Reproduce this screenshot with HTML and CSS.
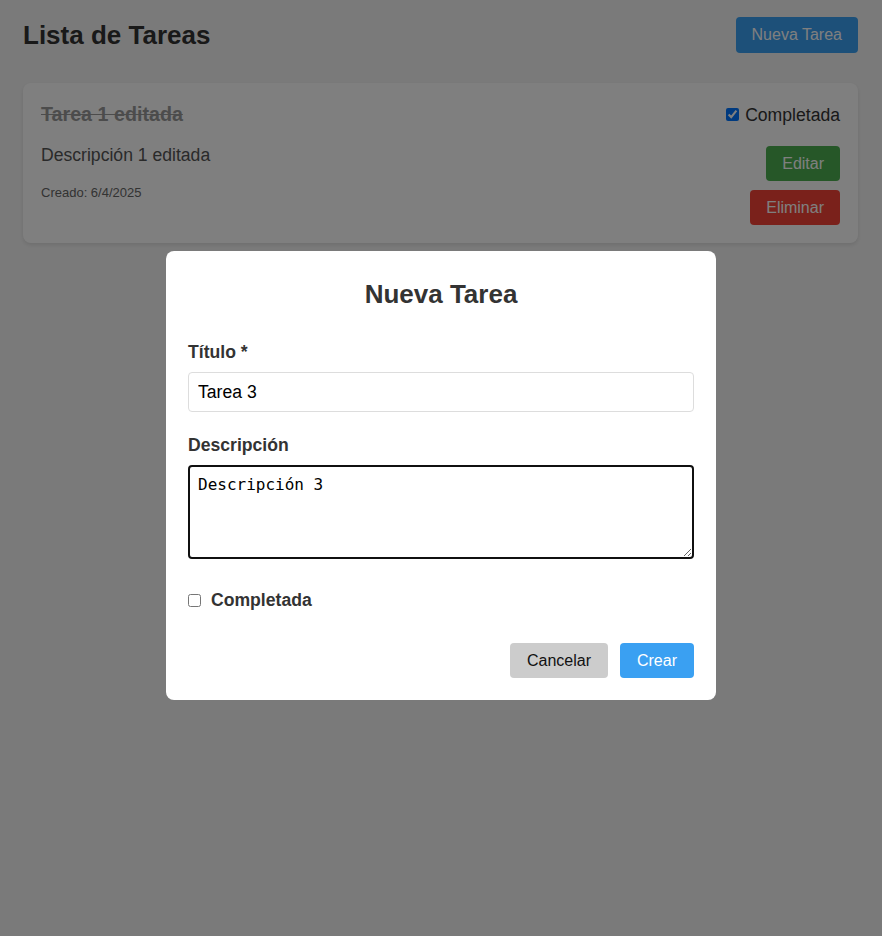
FILE: index.html
```html
<!DOCTYPE html>
<html lang="es">
<head>
<meta charset="utf-8">
<title>Lista de Tareas</title>
<link rel="stylesheet" href="styles.css">
</head>
<body>
<div class="app">
  <header class="app-header">
    <h1 class="app-title">Lista de Tareas</h1>
    <button class="btn btn-primary btn-header">Nueva Tarea</button>
  </header>

  <div class="task-card">
    <div class="task-top">
      <h3 class="task-title done">Tarea 1 editada</h3>
      <label class="task-check"><input type="checkbox" checked> Completada</label>
    </div>
    <div class="task-body">
      <div class="task-info">
        <p class="task-desc">Descripción 1 editada</p>
        <p class="task-date">Creado: 6/4/2025</p>
      </div>
      <div class="task-actions">
        <button class="btn btn-edit">Editar</button>
        <button class="btn btn-delete">Eliminar</button>
      </div>
    </div>
  </div>
</div>

<div class="overlay">
  <div class="modal">
    <h2 class="modal-title">Nueva Tarea</h2>
    <div class="field">
      <label class="field-label">Título *</label>
      <input class="field-input" type="text" value="Tarea 3">
    </div>
    <div class="field">
      <label class="field-label">Descripción</label>
      <textarea class="field-textarea">Descripción 3</textarea>
    </div>
    <label class="field-check"><input type="checkbox"> Completada</label>
    <div class="modal-actions">
      <button class="btn btn-cancel">Cancelar</button>
      <button class="btn btn-primary">Crear</button>
    </div>
  </div>
</div>
</body>
</html>
```
FILE: styles.css
```css
* { box-sizing: border-box; }

html, body {
  margin: 0;
  padding: 0;
}

body {
  background: #f5f5f5;
  font-family: "Liberation Sans", Arial, sans-serif;
  color: #333;
  height: 936px;
}

.app {
  padding: 17px 24px 17px 23px;
}

.app-header {
  display: flex;
  justify-content: space-between;
  align-items: center;
  height: 35px;
  margin-bottom: 31px;
}

.app-title {
  margin: 0;
  font-size: 26px;
  line-height: 30px;
  font-weight: bold;
  color: #333;
}

.btn {
  font-family: "Liberation Sans", Arial, sans-serif;
  font-size: 16px;
  line-height: 19px;
  padding: 8px 16px;
  border: none;
  border-radius: 4px;
  cursor: pointer;
  color: #fff;
}

.btn-header {
  height: 36px;
}

.btn-primary { background: #3aa0f2; }
.btn-edit { background: #4caf50; }
.btn-delete { background: #f44336; }
.btn-cancel { background: #ccc; color: #111; }

.task-card {
  background: #fff;
  border-radius: 8px;
  box-shadow: 0 2px 4px rgba(0, 0, 0, 0.1);
  padding: 20px 18px 18px;
}

.task-top {
  display: flex;
  justify-content: space-between;
  align-items: center;
  margin-bottom: 19px;
}

.task-title {
  margin: 0;
  font-size: 19.7px;
  line-height: 23px;
  font-weight: bold;
  color: #999;
}

.task-title.done { text-decoration: line-through; }

.task-check {
  display: flex;
  align-items: center;
  font-size: 17.6px;
  line-height: 20px;
  color: #333;
}

.task-check input {
  width: 13px;
  height: 13px;
  margin: 0 6px 0 0;
}

.task-body {
  display: flex;
  justify-content: space-between;
  align-items: flex-start;
}

.task-desc {
  margin: 0 0 20px;
  font-size: 17.6px;
  line-height: 20px;
  color: #555;
}

.task-date {
  margin: 0;
  font-size: 13px;
  line-height: 15px;
  color: #666;
}

.task-actions {
  display: flex;
  flex-direction: column;
  align-items: flex-end;
  gap: 9px;
  padding-top: 1px;
}

.overlay {
  position: fixed;
  inset: 0;
  background: rgba(0, 0, 0, 0.5);
  display: flex;
  justify-content: center;
  align-items: center;
}

.modal {
  width: 550px;
  margin-top: 15px;
  background: #fff;
  border-radius: 8px;
  padding: 22px;
}

.modal-title {
  margin: 6px 0 33px;
  text-align: center;
  font-size: 26px;
  line-height: 30px;
  font-weight: bold;
  color: #333;
}

.field { margin-bottom: 23px; }

.field-label {
  display: block;
  margin-bottom: 10px;
  font-size: 17.6px;
  line-height: 20px;
  font-weight: bold;
  color: #333;
}

.field-input {
  display: block;
  width: 100%;
  height: 40px;
  padding: 9px;
  border: 1px solid #ddd;
  border-radius: 4px;
  font-family: "Liberation Sans", Arial, sans-serif;
  font-size: 17.6px;
  color: #000;
  background: #fff;
}

.field-textarea {
  display: block;
  width: 100%;
  height: 94px;
  padding: 8px;
  border: 2px solid #101010;
  border-radius: 4px;
  font-family: "DejaVu Sans Mono", monospace;
  font-size: 16px;
  color: #000;
  background: #fff;
  outline: none;
}

.field + .field { margin-bottom: 31px; }

.field-check {
  display: flex;
  align-items: center;
  font-size: 17.6px;
  line-height: 20px;
  font-weight: bold;
  color: #333;
  margin-bottom: 33px;
}

.field-check input {
  width: 13px;
  height: 13px;
  margin: 0 10px 0 0;
}

.modal-actions {
  display: flex;
  justify-content: flex-end;
  gap: 12px;
}

.modal-actions .btn {
  height: 35px;
  padding: 8px 17px;
}
```
